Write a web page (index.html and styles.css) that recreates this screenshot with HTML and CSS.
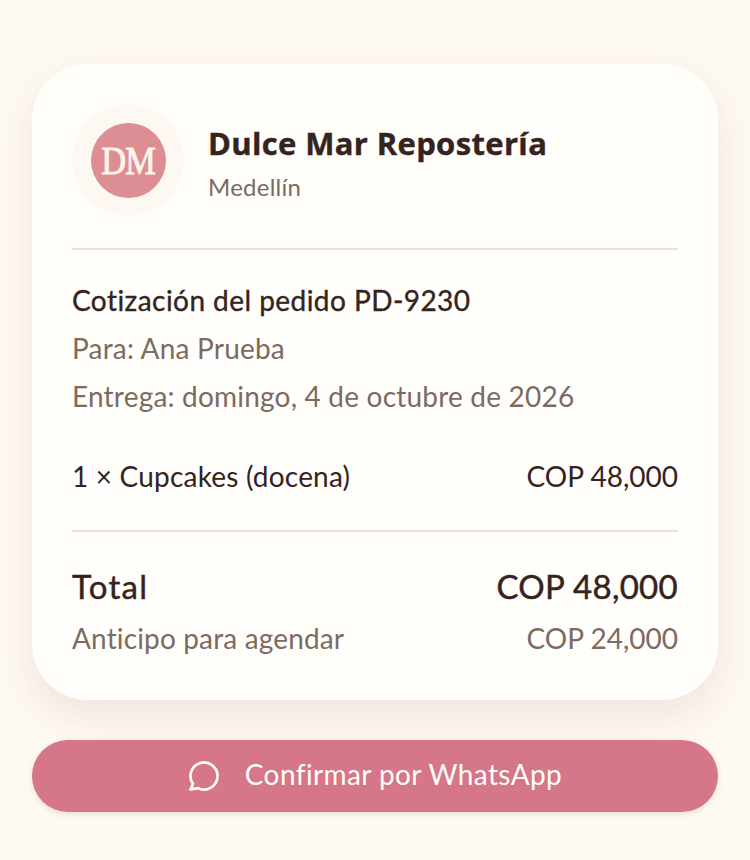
FILE: index.html
```html
<!DOCTYPE html>
<html lang="es">
<head>
<meta charset="utf-8">
<title>Cotización</title>
<link rel="stylesheet" href="styles.css">
</head>
<body>
<main class="page">
  <section class="card">
    <header class="brand">
      <div class="avatar"><div class="logo"><span class="logo-mark">DM</span></div></div>
      <div class="brand-text">
        <h1 class="name">Dulce Mar Repostería</h1>
        <p class="city">Medellín</p>
      </div>
    </header>
    <div class="info">
      <p class="quote">Cotización del pedido PD-9230</p>
      <p class="meta">Para: Ana Prueba</p>
      <p class="meta">Entrega: domingo, 4 de octubre de 2026</p>
    </div>
    <div class="row item"><span>1 × Cupcakes (docena)</span><span class="amount">COP 48,000</span></div>
    <div class="totals">
      <div class="row total"><span class="total-label">Total</span><span>COP 48,000</span></div>
      <div class="row deposit"><span>Anticipo para agendar</span><span class="amount">COP 24,000</span></div>
    </div>
  </section>
  <button class="cta" type="button">
    <svg class="cta-icon" viewBox="0 0 24 24" width="36" height="36" fill="none" stroke="#fffdf9" stroke-width="1.8" stroke-linecap="round" stroke-linejoin="round" aria-hidden="true"><path d="M3 21l1.65-3.8a9 9 0 1 1 3.4 2.9L3 21"/></svg>
    <span class="cta-label">Confirmar por WhatsApp</span>
  </button>
</main>
</body>
</html>
```
FILE: styles.css
```css
* { box-sizing: border-box; }
html, body { margin: 0; padding: 0; }
body {
  background: #fef9f2;
  color: #35231d;
  font-family: Lato, "Liberation Sans", sans-serif;
  font-variant-ligatures: none;
}
.page {
  width: 750px;
  height: 860px;
  padding: 64px 32px 0;
  display: flex;
  flex-direction: column;
  gap: 40px;
}
.card {
  height: 636px;
  background: #fffefb;
  border-radius: 56px;
  padding: 40px;
  box-shadow: 0 16px 40px rgba(110, 60, 40, 0.1);
}
.brand {
  display: flex;
  align-items: center;
  gap: 24px;
  padding-bottom: 32px;
  border-bottom: 2px solid #e8e2da;
}
.avatar {
  width: 112px;
  height: 112px;
  border-radius: 50%;
  background: #fdf8f1;
  display: flex;
  align-items: center;
  justify-content: center;
}
.logo {
  width: 75px;
  height: 75px;
  border-radius: 50%;
  background: #dc8e94;
  color: #fdf5e9;
  display: flex;
  align-items: center;
  justify-content: center;
  font-family: "Liberation Serif", serif;
  font-size: 40px;
  -webkit-text-stroke: 0.9px #fdf5e9;
}
.logo-mark { display: inline-block; transform: scaleX(0.86); letter-spacing: -1px; }
.brand-text { display: flex; flex-direction: column; gap: 8px; padding-top: 6px; }
.name {
  margin: 0;
  font-family: "Open Sans", sans-serif;
  font-size: 31px;
  line-height: 40px;
  font-weight: 700;
  letter-spacing: 0.35px;
  -webkit-text-stroke: 0.4px #35231d;
}
.city { margin: 0; font-size: 24px; line-height: 32px; color: #7d6a61; letter-spacing: 0.25px; }
.info { padding-top: 30px; display: flex; flex-direction: column; gap: 8px; }
.info p { margin: 0; line-height: 36px; padding: 2px 0; font-size: 28px; }
.quote { letter-spacing: 0.45px; -webkit-text-stroke: 0.35px #35231d; }
.meta { color: #7d6a61; letter-spacing: 0.2px; }
.row { display: flex; justify-content: space-between; align-items: center; }
.item { font-size: 28px; line-height: 40px; padding: 40px 0 34px; border-bottom: 2px solid #e8e2da; letter-spacing: 0.2px; }
.amount { letter-spacing: 0; }
.totals { padding-top: 30px; display: flex; flex-direction: column; gap: 8px; }
.total { font-size: 33px; line-height: 48px; letter-spacing: 0.3px; -webkit-text-stroke: 0.45px #35231d; }
.total-label { letter-spacing: 1.3px; }
.deposit { font-size: 28px; line-height: 40px; color: #7d6a61; letter-spacing: 0.15px; }
.cta {
  height: 72px;
  width: 100%;
  border: 0;
  padding: 0 2px 0 0;
  border-radius: 36px;
  background: #d57788;
  color: #fffdf9;
  font: 400 28px Lato, "Liberation Sans", sans-serif;
  font-variant-ligatures: none;
  letter-spacing: 0.4px;
  display: flex;
  align-items: center;
  justify-content: center;
  gap: 23px;
  box-shadow: 0 2px 6px rgba(90, 50, 40, 0.12);
}
.cta-label { padding-bottom: 4px; }
```
